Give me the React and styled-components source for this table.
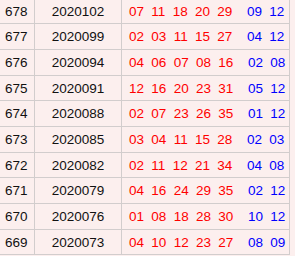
import React from "react";
import styled, { createGlobalStyle } from "styled-components";

const GlobalStyle = createGlobalStyle`
  html, body {
    margin: 0;
    padding: 0;
    background: #fcefee;
    overflow: hidden;
  }
`;

const Table = styled.div`
  display: grid;
  grid-template-columns: 35px 87px 168px;
  grid-auto-rows: 25.67px;
  margin-top: -1.2px;
  font-family: "Liberation Sans", Arial, sans-serif;
  font-size: 13.5px;
  color: #111;
`;

const Cell = styled.div`
  display: flex;
  align-items: center;
  justify-content: ${(p) => (p.$center ? "center" : "flex-start")};
  padding-left: ${(p) => p.$pad || 0}px;
  border-right: 1px solid #d2cdcd;
  border-bottom: 1px solid #d2cdcd;
  box-sizing: border-box;
  white-space: nowrap;
`;

const Balls = styled.div`
  display: flex;
  gap: 7.3px;
  color: ${(p) => (p.$blue ? "#0000ff" : "#ff0000")};
  margin-left: ${(p) => (p.$blue ? 14.7 : 0)}px;
`;

const rows = [
  ["678", "2020102", ["07", "11", "18", "20", "29"], ["09", "12"]],
  ["677", "2020099", ["02", "03", "11", "15", "27"], ["04", "12"]],
  ["676", "2020094", ["04", "06", "07", "08", "16"], ["02", "08"]],
  ["675", "2020091", ["12", "16", "20", "23", "31"], ["05", "12"]],
  ["674", "2020088", ["02", "07", "23", "26", "35"], ["01", "12"]],
  ["673", "2020085", ["03", "04", "11", "15", "28"], ["02", "03"]],
  ["672", "2020082", ["02", "11", "12", "21", "34"], ["04", "08"]],
  ["671", "2020079", ["04", "16", "24", "29", "35"], ["02", "12"]],
  ["670", "2020076", ["01", "08", "18", "28", "30"], ["10", "12"]],
  ["669", "2020073", ["04", "10", "12", "23", "27"], ["08", "09"]],
];

export default function App() {
  return (
    <>
      <GlobalStyle />
      <Table>
        {rows.map(([no, issue, red, blue]) => (
          <React.Fragment key={no}>
            <Cell $pad={5}>{no}</Cell>
            <Cell $center>{issue}</Cell>
            <Cell $pad={7}>
              <Balls>
                {red.map((n, i) => (
                  <span key={i}>{n}</span>
                ))}
              </Balls>
              <Balls $blue>
                {blue.map((n, i) => (
                  <span key={i}>{n}</span>
                ))}
              </Balls>
            </Cell>
          </React.Fragment>
        ))}
      </Table>
    </>
  );
}
